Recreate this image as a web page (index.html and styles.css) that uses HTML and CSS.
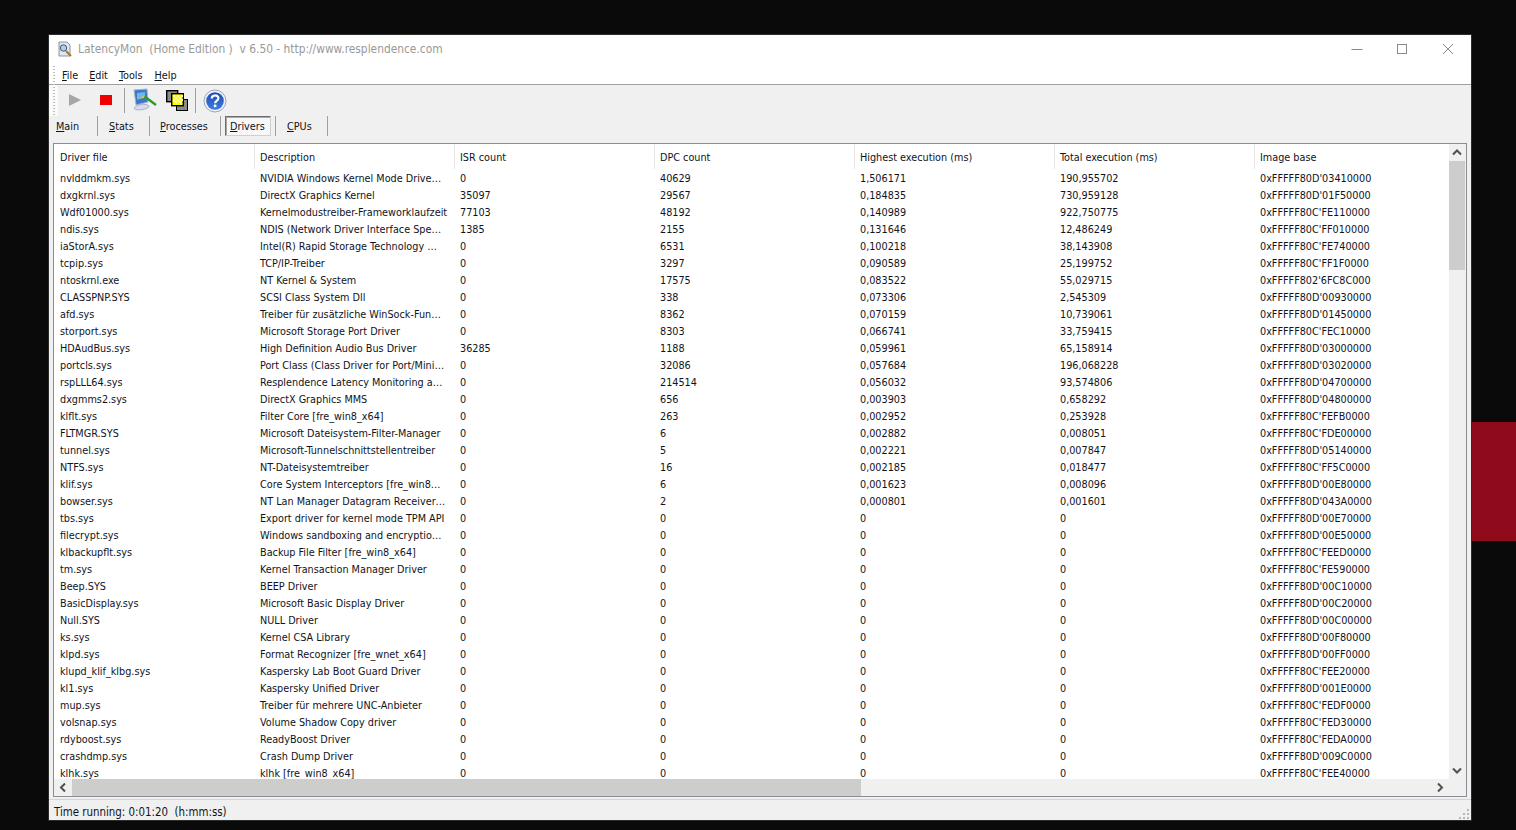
FILE: index.html
```html
<!DOCTYPE html>
<html lang="en">
<head>
<meta charset="utf-8">
<title>LatencyMon</title>
<link rel="stylesheet" href="styles.css">
</head>
<body>
<div class="red-block"></div>
<div class="window">
  <header class="titlebar">
    <svg class="app-icon" width="16" height="16" viewBox="0 0 16 16"><path d="M2 1h8l3 3v11H2z" fill="#dfe6ee" stroke="#8a94a0"/><circle cx="6.500" cy="7" r="3.200" fill="#a9d0ee" stroke="#4a5a6a"/><path d="M9 10l5 5" stroke="#a5763a" stroke-width="2"/></svg>
    <span class="title-text">LatencyMon&nbsp; (Home Edition )&nbsp; v 6.50 - http://www.resplendence.com</span>
    <div class="caption">
      <svg width="12" height="12" viewBox="0 0 12 12"><path d="M0.500 6.500h11" stroke="#8a8a8a"/></svg>
      <svg width="12" height="12" viewBox="0 0 12 12"><rect x="1.500" y="1.500" width="9" height="9" fill="none" stroke="#8a8a8a"/></svg>
      <svg class="cap-close" width="12" height="12" viewBox="0 0 12 12"><path d="M1 1l10 10M11 1L1 11" stroke="#8a8a8a"/></svg>
    </div>
  </header>
  <i class="gripper"></i>
  <nav class="menubar">
    <span><u>F</u>ile</span><span><u>E</u>dit</span><span><u>T</u>ools</span><span><u>H</u>elp</span>
  </nav>
  <section class="toolbar">
    <div class="tool-row">
      <svg class="tool t-play" width="12" height="14" viewBox="0 0 12 14"><path d="M0 1l12 6L0 13z" fill="#a6a6a6"/></svg>
      <svg class="tool t-stop" width="12" height="10" viewBox="0 0 12 10"><rect width="12" height="10" fill="#f00000"/></svg>
      <i class="tool-sep s1"></i>
      <svg class="tool t-mon" width="24" height="24" viewBox="0 0 24 24"><path d="M1 2l13-1 1 13-12 3z" fill="#3a78cc" stroke="#a9b4c8"/><path d="M4 5l8-1v4l-8 4z" fill="#6ab8ec"/><path d="M1 20c3-4 12-5 15-2 1 3-14 6-15 2z" fill="#d6dcec" stroke="#8f9ab8" stroke-width=".7"/><path d="M11 8l12 9" stroke="#2f9a2f" stroke-width="2.400"/><path d="M5 11l7-4-1 3z" fill="#f2c022"/></svg>
      <svg class="tool t-win" width="23" height="23" viewBox="0 0 23 23"><rect x="0.700" y="0.700" width="11" height="11" fill="#8a8a8a" stroke="#000" stroke-width="1.400"/><rect x="10.500" y="9.500" width="11" height="11" fill="#8a8a8a" stroke="#000"/><rect x="5.700" y="3.700" width="11.600" height="12" fill="#ff0" stroke="#000" stroke-width="1.400"/><path d="M7 5h2v2H7zM11 5h2v2h-2zM15 5h2v2h-2zM9 7h2v2H9zM13 7h2v2h-2zM7 9h2v2H7zM11 9h2v2h-2zM15 9h2v2h-2zM9 11h2v2H9zM13 11h2v2h-2z" fill="#fbfbd0"/></svg>
      <i class="tool-sep s2"></i>
      <svg class="tool t-help" width="24" height="24" viewBox="0 0 24 24"><defs><linearGradient id="helpfill" x1="0" y1="0" x2="0" y2="1"><stop offset="0" stop-color="#1d4bb4"/><stop offset="1" stop-color="#3c7de0"/></linearGradient></defs><circle cx="12" cy="12" r="11" fill="#eef1f7" stroke="#9aa6b8"/><circle cx="12" cy="12" r="8.800" fill="url(#helpfill)"/><path d="M8.800 9.500c0-4 6.600-4 6.600-.2 0 2.700-3.300 2.500-3.300 5" fill="none" stroke="#fff" stroke-width="2.200"/><rect x="10.800" y="15.600" width="2.600" height="2.600" fill="#fff"/></svg>
    </div>
    <div class="tabs">
      <span class="tab tab-main"><u>M</u>ain</span>
      <span class="tab tab-stats"><u>S</u>tats</span>
      <span class="tab tab-proc"><u>P</u>rocesses</span>
      <span class="tab tab-drv"><span class="pressed"><u>D</u>rivers</span></span>
      <span class="tab tab-cpu"><u>C</u>PUs</span>
    </div>
  </section>
  <main class="listbox">
    <div class="list-view">
      <div class="row head"><span>Driver file</span><span>Description</span><span>ISR count</span><span>DPC count</span><span>Highest execution (ms)</span><span>Total execution (ms)</span><span>Image base</span></div>
      <div class="row"><span>nvlddmkm.sys</span><span>NVIDIA Windows Kernel Mode Drive…</span><span>0</span><span>40629</span><span>1,506171</span><span>190,955702</span><span>0xFFFFF80D'03410000</span></div>
      <div class="row"><span>dxgkrnl.sys</span><span>DirectX Graphics Kernel</span><span>35097</span><span>29567</span><span>0,184835</span><span>730,959128</span><span>0xFFFFF80D'01F50000</span></div>
      <div class="row"><span>Wdf01000.sys</span><span>Kernelmodustreiber-Frameworklaufzeit</span><span>77103</span><span>48192</span><span>0,140989</span><span>922,750775</span><span>0xFFFFF80C'FE110000</span></div>
      <div class="row"><span>ndis.sys</span><span>NDIS (Network Driver Interface Spe…</span><span>1385</span><span>2155</span><span>0,131646</span><span>12,486249</span><span>0xFFFFF80C'FF010000</span></div>
      <div class="row"><span>iaStorA.sys</span><span>Intel(R) Rapid Storage Technology …</span><span>0</span><span>6531</span><span>0,100218</span><span>38,143908</span><span>0xFFFFF80C'FE740000</span></div>
      <div class="row"><span>tcpip.sys</span><span>TCP/IP-Treiber</span><span>0</span><span>3297</span><span>0,090589</span><span>25,199752</span><span>0xFFFFF80C'FF1F0000</span></div>
      <div class="row"><span>ntoskrnl.exe</span><span>NT Kernel &amp; System</span><span>0</span><span>17575</span><span>0,083522</span><span>55,029715</span><span>0xFFFFF802'6FC8C000</span></div>
      <div class="row"><span>CLASSPNP.SYS</span><span>SCSI Class System Dll</span><span>0</span><span>338</span><span>0,073306</span><span>2,545309</span><span>0xFFFFF80D'00930000</span></div>
      <div class="row"><span>afd.sys</span><span>Treiber für zusätzliche WinSock-Fun…</span><span>0</span><span>8362</span><span>0,070159</span><span>10,739061</span><span>0xFFFFF80D'01450000</span></div>
      <div class="row"><span>storport.sys</span><span>Microsoft Storage Port Driver</span><span>0</span><span>8303</span><span>0,066741</span><span>33,759415</span><span>0xFFFFF80C'FEC10000</span></div>
      <div class="row"><span>HDAudBus.sys</span><span>High Definition Audio Bus Driver</span><span>36285</span><span>1188</span><span>0,059961</span><span>65,158914</span><span>0xFFFFF80D'03000000</span></div>
      <div class="row"><span>portcls.sys</span><span>Port Class (Class Driver for Port/Mini…</span><span>0</span><span>32086</span><span>0,057684</span><span>196,068228</span><span>0xFFFFF80D'03020000</span></div>
      <div class="row"><span>rspLLL64.sys</span><span>Resplendence Latency Monitoring a…</span><span>0</span><span>214514</span><span>0,056032</span><span>93,574806</span><span>0xFFFFF80D'04700000</span></div>
      <div class="row"><span>dxgmms2.sys</span><span>DirectX Graphics MMS</span><span>0</span><span>656</span><span>0,003903</span><span>0,658292</span><span>0xFFFFF80D'04800000</span></div>
      <div class="row"><span>klflt.sys</span><span>Filter Core [fre_win8_x64]</span><span>0</span><span>263</span><span>0,002952</span><span>0,253928</span><span>0xFFFFF80C'FEFB0000</span></div>
      <div class="row"><span>FLTMGR.SYS</span><span>Microsoft Dateisystem-Filter-Manager</span><span>0</span><span>6</span><span>0,002882</span><span>0,008051</span><span>0xFFFFF80C'FDE00000</span></div>
      <div class="row"><span>tunnel.sys</span><span>Microsoft-Tunnelschnittstellentreiber</span><span>0</span><span>5</span><span>0,002221</span><span>0,007847</span><span>0xFFFFF80D'05140000</span></div>
      <div class="row"><span>NTFS.sys</span><span>NT-Dateisystemtreiber</span><span>0</span><span>16</span><span>0,002185</span><span>0,018477</span><span>0xFFFFF80C'FF5C0000</span></div>
      <div class="row"><span>klif.sys</span><span>Core System Interceptors [fre_win8…</span><span>0</span><span>6</span><span>0,001623</span><span>0,008096</span><span>0xFFFFF80D'00E80000</span></div>
      <div class="row"><span>bowser.sys</span><span>NT Lan Manager Datagram Receiver…</span><span>0</span><span>2</span><span>0,000801</span><span>0,001601</span><span>0xFFFFF80D'043A0000</span></div>
      <div class="row"><span>tbs.sys</span><span>Export driver for kernel mode TPM API</span><span>0</span><span>0</span><span>0</span><span>0</span><span>0xFFFFF80D'00E70000</span></div>
      <div class="row"><span>filecrypt.sys</span><span>Windows sandboxing and encryptio…</span><span>0</span><span>0</span><span>0</span><span>0</span><span>0xFFFFF80D'00E50000</span></div>
      <div class="row"><span>klbackupflt.sys</span><span>Backup File Filter [fre_win8_x64]</span><span>0</span><span>0</span><span>0</span><span>0</span><span>0xFFFFF80C'FEED0000</span></div>
      <div class="row"><span>tm.sys</span><span>Kernel Transaction Manager Driver</span><span>0</span><span>0</span><span>0</span><span>0</span><span>0xFFFFF80C'FE590000</span></div>
      <div class="row"><span>Beep.SYS</span><span>BEEP Driver</span><span>0</span><span>0</span><span>0</span><span>0</span><span>0xFFFFF80D'00C10000</span></div>
      <div class="row"><span>BasicDisplay.sys</span><span>Microsoft Basic Display Driver</span><span>0</span><span>0</span><span>0</span><span>0</span><span>0xFFFFF80D'00C20000</span></div>
      <div class="row"><span>Null.SYS</span><span>NULL Driver</span><span>0</span><span>0</span><span>0</span><span>0</span><span>0xFFFFF80D'00C00000</span></div>
      <div class="row"><span>ks.sys</span><span>Kernel CSA Library</span><span>0</span><span>0</span><span>0</span><span>0</span><span>0xFFFFF80D'00F80000</span></div>
      <div class="row"><span>klpd.sys</span><span>Format Recognizer [fre_wnet_x64]</span><span>0</span><span>0</span><span>0</span><span>0</span><span>0xFFFFF80D'00FF0000</span></div>
      <div class="row"><span>klupd_klif_klbg.sys</span><span>Kaspersky Lab Boot Guard Driver</span><span>0</span><span>0</span><span>0</span><span>0</span><span>0xFFFFF80C'FEE20000</span></div>
      <div class="row"><span>kl1.sys</span><span>Kaspersky Unified Driver</span><span>0</span><span>0</span><span>0</span><span>0</span><span>0xFFFFF80D'001E0000</span></div>
      <div class="row"><span>mup.sys</span><span>Treiber für mehrere UNC-Anbieter</span><span>0</span><span>0</span><span>0</span><span>0</span><span>0xFFFFF80C'FEDF0000</span></div>
      <div class="row"><span>volsnap.sys</span><span>Volume Shadow Copy driver</span><span>0</span><span>0</span><span>0</span><span>0</span><span>0xFFFFF80C'FED30000</span></div>
      <div class="row"><span>rdyboost.sys</span><span>ReadyBoost Driver</span><span>0</span><span>0</span><span>0</span><span>0</span><span>0xFFFFF80C'FEDA0000</span></div>
      <div class="row"><span>crashdmp.sys</span><span>Crash Dump Driver</span><span>0</span><span>0</span><span>0</span><span>0</span><span>0xFFFFF80D'009C0000</span></div>
      <div class="row"><span>klhk.sys</span><span>klhk [fre_win8_x64]</span><span>0</span><span>0</span><span>0</span><span>0</span><span>0xFFFFF80C'FEE40000</span></div>
    </div>
    <div class="vscroll">
      <svg width="16" height="17" viewBox="0 0 16 17"><path d="M4 10.500l4-4 4 4" fill="none" stroke="#505050" stroke-width="2"/></svg>
      <div class="v-track"><div class="v-thumb"></div></div>
      <svg width="16" height="17" viewBox="0 0 16 17"><path d="M4 6.500l4 4 4-4" fill="none" stroke="#505050" stroke-width="2"/></svg>
    </div>
    <div class="hscroll">
      <svg width="18" height="17" viewBox="0 0 18 17"><path d="M11 4.500l-4 4 4 4" fill="none" stroke="#505050" stroke-width="2"/></svg>
      <div class="h-track"><div class="h-thumb"></div></div>
      <svg width="18" height="17" viewBox="0 0 18 17"><path d="M7 4.500l4 4-4 4" fill="none" stroke="#505050" stroke-width="2"/></svg>
    </div>
    <div class="corner"></div>
  </main>
  <footer class="statusbar">
    <span>Time running: 0:01:20&nbsp; (h:mm:ss)</span>
    <svg class="grip" width="12" height="12" viewBox="0 0 12 12"><path d="M9 1h2v2H9zM5 5h2v2H5zM9 5h2v2H9zM1 9h2v2H1zM5 9h2v2H5zM9 9h2v2H9z" fill="#b8b8b8"/></svg>
  </footer>
</div>
</body>
</html>
```

FILE: styles.css
```css
html, body {
  margin: 0;
  padding: 0;
  height: 830px;
  overflow: hidden;
  background: #0a0a0a;
  font-family: "DejaVu Sans Condensed", "DejaVu Sans", sans-serif;
  font-size: 10.75px;
  color: #10131c;
}
.red-block {
  position: absolute;
  left: 1471px;
  top: 422px;
  width: 45px;
  height: 119px;
  background: #8f0a1b;
}
.window {
  position: absolute;
  left: 49px;
  top: 35px;
  width: 1422px;
  height: 785px;
  background: #f0f0f0;
  display: flex;
  flex-direction: column;
  box-shadow: 0 0 0 1px #2c2c2c;
}
.titlebar {
  height: 31px;
  background: #fff;
  display: flex;
  align-items: center;
  padding-left: 8px;
  box-sizing: border-box;
  padding-bottom: 3px;
}
.app-icon { margin-right: 5px; }
.title-text { color: #999; font-size: 11.85px; }
.caption {
  margin-left: auto;
  display: flex;
  gap: 33px;
  padding-right: 17px;
}
.cap-close { margin-left: 1px; }
.gripper {
  position: absolute;
  left: 4px;
  top: 31px;
  width: 2px;
  height: 49px;
  background: repeating-linear-gradient(#bcbcbc 0 1px, transparent 1px 3px);
  z-index: 1;
}
.menubar {
  height: 19px;
  background: #fff;
  border-bottom: 1px solid #a0a0a0;
  box-sizing: border-box;
  display: flex;
  align-items: center;
  gap: 11px;
  padding-left: 13px;
  padding-top: 1px;
}
.menubar span:last-child { margin-left: 1px; }
.toolbar {
  height: 58px;
  display: flex;
  flex-direction: column;
}
.tool-row {
  height: 31px;
  position: relative;
  display: flex;
  align-items: center;
  border-left: 9px solid #fbfbfb;
  box-sizing: border-box;
}
.tool { display: block; flex: none; }
.t-play { margin-left: 11px; }
.t-stop { margin-left: 19px; }
.t-mon { position: absolute; left: 75px; top: 3px; }
.t-win { position: absolute; left: 108px; top: 5px; }
.t-help { position: absolute; left: 145px; top: 4px; }
.tool-sep {
  position: absolute;
  top: 3px;
  width: 1px;
  height: 25px;
  background: #a0a0a0;
}
.s1 { left: 66px; }
.s2 { left: 137px; }
.tabs {
  height: 21px;
  display: flex;
  align-items: center;
}
.tab {
  box-sizing: border-box;
  height: 20px;
  display: flex;
  align-items: center;
  border-right: 1px solid #a0a0a0;
}
.tab-main { width: 49px; padding-left: 7px; }
.tab-stats { width: 52px; padding-left: 11px; }
.tab-proc { width: 71px; padding-left: 10px; }
.tab-drv { width: 55px; padding-left: 4px; }
.tab-cpu { width: 52px; padding-left: 11px; }
.pressed {
  box-sizing: border-box;
  width: 46px;
  height: 20px;
  padding-left: 4px;
  line-height: 20px;
  border: 1px solid #6d6d6d;
  border-right-color: #d0d0d0;
  border-bottom-color: #d0d0d0;
  box-shadow: inset 1px 1px 0 #a8a8a8;
  background: repeating-conic-gradient(#fff 0 25%, #f0f0f0 0 50%) 0 0 / 2px 2px;
}
.listbox {
  position: relative;
  margin-left: 4px;
  width: 1414px;
  height: 655px;
  box-sizing: border-box;
  border: 1px solid #8c8c94;
  background: #f0f0f0;
  display: grid;
  grid-template-columns: 1395px 16px;
  grid-template-rows: 635px 17px;
}
.list-view {
  background: #fff;
  overflow: hidden;
}
.row {
  display: grid;
  grid-template-columns: repeat(7, 200px);
  height: 17px;
  line-height: 17px;
  white-space: nowrap;
}
.row > span { padding-left: 6px; }
.row.head {
  height: 26px;
  line-height: 27px;
}
.row.head > span {
  height: 25px;
  box-sizing: border-box;
}
.row.head > span + span {
  border-left: 1px solid #e6e6e6;
  padding-left: 5px;
}
.vscroll {
  display: flex;
  flex-direction: column;
  background: #f0f0f0;
}
.v-track { flex: 1; }
.v-thumb { height: 109px; background: #cdcdcd; }
.hscroll {
  display: flex;
  background: #f0f0f0;
}
.h-track { flex: 1; }
.h-thumb { margin-left: 0; width: 789px; height: 17px; background: #cdcdcd; }
.corner { background: #f0f0f0; }
.statusbar {
  margin-top: 2px;
  height: 21px;
  box-sizing: border-box;
  border-top: 1px solid #d4d4d4;
  display: flex;
  align-items: center;
  justify-content: space-between;
  padding: 4px 1px 0 5px;
  font-size: 11.4px;
}
.grip { align-self: flex-end; }
```
